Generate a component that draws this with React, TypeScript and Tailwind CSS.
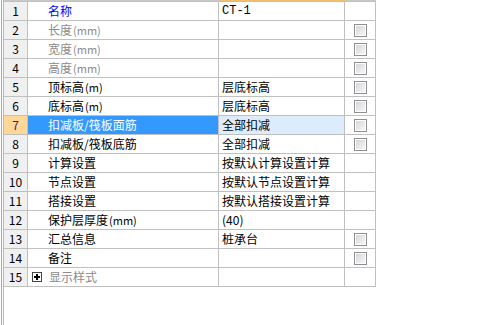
import { Fragment } from "react";

type Row = {
  name: string;
  unit?: string;
  value?: string;
  tone?: "blue" | "gray" | "black";
  check?: boolean;
  expand?: boolean;
  mono?: boolean;
};

const rows: Row[] = [
  { name: "名称", value: "CT-1", tone: "blue", mono: true },
  { name: "长度", unit: "(mm)", tone: "gray", check: true },
  { name: "宽度", unit: "(mm)", tone: "gray", check: true },
  { name: "高度", unit: "(mm)", tone: "gray", check: true },
  { name: "顶标高", unit: "(m)", value: "层底标高", check: true },
  { name: "底标高", unit: "(m)", value: "层底标高", check: true },
  { name: "扣减板/筏板面筋", value: "全部扣减", check: true },
  { name: "扣减板/筏板底筋", value: "全部扣减", check: true },
  { name: "计算设置", value: "按默认计算设置计算" },
  { name: "节点设置", value: "按默认节点设置计算" },
  { name: "搭接设置", value: "按默认搭接设置计算" },
  { name: "保护层厚度", unit: "(mm)", value: "(40)" },
  { name: "汇总信息", value: "桩承台", check: true },
  { name: "备注", check: true },
  { name: "显示样式", tone: "gray", expand: true },
];

const SELECTED = 6;

function CheckBox() {
  return (
    <div className="w-[13px] h-[13px] border border-[#8f8f8f] bg-white p-px">
      <div className="w-full h-full bg-gradient-to-br from-[#d4d6da] to-[#f7f7f8]" />
    </div>
  );
}

function PlusBox() {
  return (
    <div className="w-[10px] h-[10px] border border-[#444] bg-white flex items-center justify-center relative">
      <div className="absolute w-[6px] h-[2px] bg-black" />
      <div className="absolute w-[2px] h-[6px] bg-black" />
    </div>
  );
}

export default function App() {
  const font = { fontFamily: '"Noto Sans CJK SC", "Liberation Sans", sans-serif' };
  return (
    <div className="w-[483px] h-[325px] bg-white pl-px overflow-hidden" style={font}>
      <div className="h-full border-l border-[#a8a8a8] pl-px">
        <div className="h-full border-l border-[#b8b8b8]">
          {/* top edge */}
          <div className="flex h-px">
            <div className="w-[24px] bg-[#c8c8c8]" />
            <div className="w-[191px] bg-[#c8c8c8]" />
            <div className="w-[126px] bg-[#f0c070]" />
            <div className="w-[31px] bg-[#c8c8c8]" />
          </div>
          <div className="grid grid-cols-[24px_191px_126px_31px] border-t border-[#c0c0c0] w-[372px]">
            {rows.map((r, i) => {
              const sel = i === SELECTED;
              const color = sel
                ? "text-white"
                : r.tone === "blue"
                  ? "text-[#0000ff]"
                  : r.tone === "gray"
                    ? "text-[#8a8a8a]"
                    : "text-black";
              return (
                <Fragment key={i}>
                  <div
                    className={`h-[19px] border-r border-b border-[#c0c0c0] flex items-center justify-center text-[12px] leading-none ${
                      sel ? "bg-[#ffd898] text-[#50106a]" : "bg-[#f0f0f0] text-black"
                    }`}
                  >
                    {i + 1}
                  </div>
                  <div
                    className={`h-[19px] border-r border-b border-[#c0c0c0] flex items-center text-[12px] leading-none ${color} ${
                      sel ? "bg-[#3399ff]" : "bg-white"
                    } ${r.expand ? "pl-[4px]" : "pl-[20px]"}`}
                  >
                    {r.expand && (
                      <span className="mr-[7px]">
                        <PlusBox />
                      </span>
                    )}
                    <span>{r.name}</span>
                    {r.unit && <span className="text-[11px] ml-px">{r.unit}</span>}
                  </div>
                  <div
                    className={`h-[19px] border-r border-b border-[#c0c0c0] flex items-center pl-[3px] text-[12px] leading-none text-black whitespace-nowrap overflow-hidden ${
                      sel ? "bg-[#dcecfc]" : "bg-white"
                    } ${r.mono ? "font-['Liberation_Mono',monospace]" : ""}`}
                  >
                    {r.value}
                  </div>
                  <div className="h-[19px] border-r border-b border-[#c0c0c0] flex items-center justify-center bg-white">
                    {r.check && <CheckBox />}
                  </div>
                </Fragment>
              );
            })}
          </div>
        </div>
      </div>
    </div>
  );
}
